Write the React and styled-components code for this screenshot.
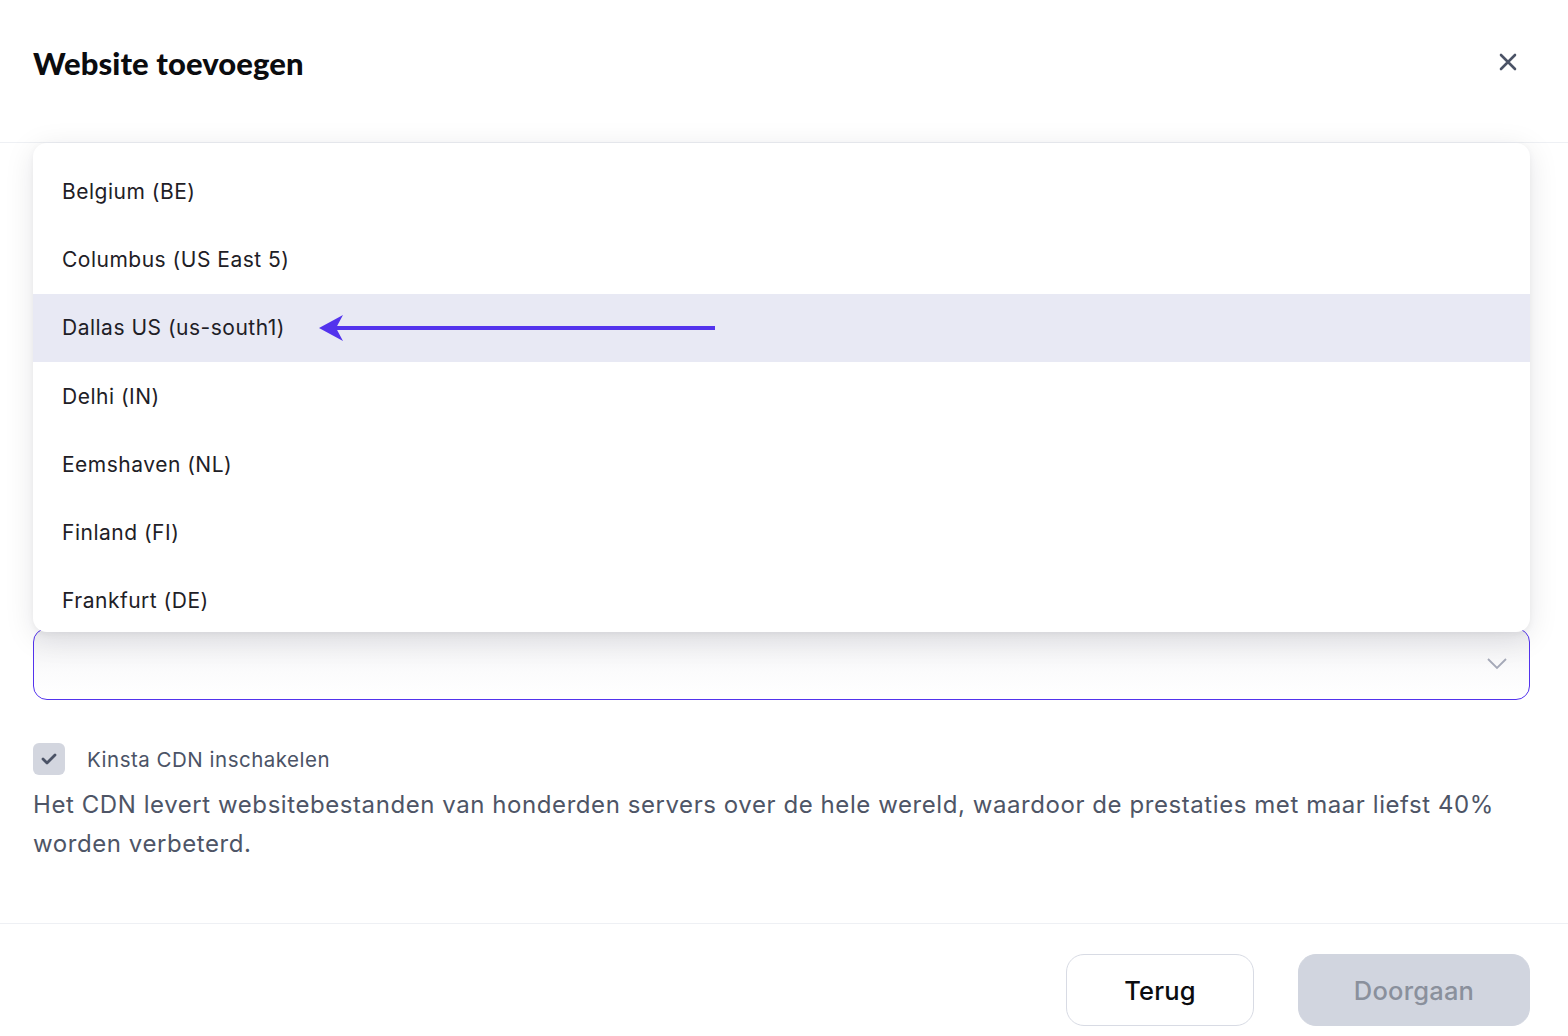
import React from 'react';
import styled, { createGlobalStyle } from 'styled-components';

const GlobalStyle = createGlobalStyle`
  *, *::before, *::after {
    box-sizing: border-box;
  }
  html, body {
    margin: 0;
    padding: 0;
    background: #fff;
  }
  body {
    font-family: Inter, "Noto Sans", sans-serif;
    -webkit-font-smoothing: antialiased;
  }
`;

const Modal = styled.div`
  width: 1568px;
  height: 1036px;
  display: flex;
  flex-direction: column;
  background: #fff;
  overflow: hidden;
`;

const Header = styled.header`
  height: 143px;
  flex-shrink: 0;
  display: flex;
  align-items: center;
  justify-content: space-between;
  padding: 0 42px 0 33px;
  border-bottom: 1px solid #eef0f4;
`;

const Title = styled.h1`
  margin: 0;
  margin-top: -16px;
  font-family: Lato, "Noto Sans", sans-serif;
  font-weight: 900;
  font-size: 31px;
  letter-spacing: 0.1px;
  color: #0b0c0f;
`;

const CloseButton = styled.button`
  border: none;
  background: none;
  padding: 0;
  margin-top: -18px;
  width: 36px;
  height: 36px;
  display: flex;
  align-items: center;
  justify-content: center;
  cursor: pointer;
`;

const Body = styled.div`
  flex: 1;
  padding: 485px 38px 0 33px;
  display: flex;
  flex-direction: column;
`;

const Field = styled.div`
  position: relative;
`;

const SelectBox = styled.div`
  height: 72px;
  border: 1px solid #5333ed;
  border-radius: 14px;
  background: linear-gradient(#efeff1, #fbfbfc 60%, #fff);
  display: flex;
  align-items: center;
  justify-content: flex-end;
  padding-right: 22px;
`;

const Menu = styled.ul`
  position: absolute;
  left: 0;
  right: 0;
  bottom: 68px;
  height: 489px;
  overflow: hidden;
  margin: 0;
  padding: 14px 0 0;
  list-style: none;
  background: #fff;
  border-radius: 14px;
  box-shadow: 0 6px 30px rgba(20, 24, 40, 0.1), 0 2px 6px rgba(20, 24, 40, 0.05);
  z-index: 2;
`;

const Item = styled.li`
  height: 68.3px;
  display: flex;
  align-items: center;
  gap: 32px;
  padding-left: 29px;
  font-size: 21px;
  letter-spacing: 0.5px;
  color: #1e2026;
  background: ${p => (p.active ? '#e8e9f4' : 'transparent')};
`;

const CheckRow = styled.label`
  display: flex;
  align-items: center;
  gap: 22px;
  margin-top: 43px;
  font-size: 20.5px;
  letter-spacing: 0.5px;
  color: #4b5366;
`;

const Checkbox = styled.span`
  width: 32px;
  height: 32px;
  border-radius: 6px;
  background: #d3d6df;
  display: flex;
  align-items: center;
  justify-content: center;
`;

const Description = styled.p`
  margin: 10px 0 0;
  font-size: 24px;
  line-height: 39px;
  letter-spacing: 0.57px;
  color: #4e5566;
`;

const Footer = styled.footer`
  height: 113px;
  flex-shrink: 0;
  border-top: 1px solid #eef0f4;
  display: flex;
  justify-content: flex-end;
  align-items: flex-start;
  gap: 44px;
  padding: 30px 38px 0 0;
`;

const Button = styled.button`
  height: 72px;
  width: ${p => p.w}px;
  border-radius: 18px;
  font-family: Inter, "Noto Sans", sans-serif;
  font-size: 25.5px;
  font-weight: 500;
  letter-spacing: 0.2px;
  border: 1px solid ${p => (p.disabled ? '#d1d5df' : '#d8dbe4')};
  background: ${p => (p.disabled ? '#d1d5df' : '#fff')};
  color: ${p => (p.disabled ? '#8a909c' : '#0b0c0f')};
`;

const regions = [
  'Belgium (BE)',
  'Columbus (US East 5)',
  'Dallas US (us-south1)',
  'Delhi (IN)',
  'Eemshaven (NL)',
  'Finland (FI)',
  'Frankfurt (DE)',
];

const Arrow = () => (
  <svg width="400" height="30" viewBox="0 0 400 30">
    <line x1="16" y1="15" x2="398" y2="15" stroke="#5333ed" strokeWidth="4" />
    <path d="M2 15 L26 2 L19 15 L26 28 Z" fill="#5333ed" />
  </svg>
);

export default function App() {
  return (
    <>
      <GlobalStyle />
      <Modal>
        <Header>
          <Title>Website toevoegen</Title>
          <CloseButton aria-label="Sluiten">
            <svg width="18" height="18" viewBox="0 0 18 18">
              <path d="M2 2 L16 16 M16 2 L2 16" stroke="#4b5366" strokeWidth="2.6" strokeLinecap="round" />
            </svg>
          </CloseButton>
        </Header>
        <Body>
          <Field>
            <Menu>
              {regions.map(r => (
                <Item key={r} active={r.startsWith('Dallas')}>
                  {r}
                  {r.startsWith('Dallas') && <Arrow />}
                </Item>
              ))}
            </Menu>
            <SelectBox>
              <svg width="20" height="12" viewBox="0 0 20 12">
                <path d="M1 1 L10 10 L19 1" stroke="#a5a9b8" strokeWidth="1.8" fill="none" />
              </svg>
            </SelectBox>
          </Field>
          <CheckRow>
            <Checkbox>
              <svg width="16" height="12" viewBox="0 0 16 12">
                <path d="M2 6 L6 10 L14 2" stroke="#4b5366" strokeWidth="2.8" fill="none" strokeLinecap="round" strokeLinejoin="round" />
              </svg>
            </Checkbox>
            Kinsta CDN inschakelen
          </CheckRow>
          <Description>
            Het CDN levert websitebestanden van honderden servers over de hele wereld, waardoor de prestaties met maar liefst 40% worden verbeterd.
          </Description>
        </Body>
        <Footer>
          <Button w={188}>Terug</Button>
          <Button w={232} disabled>Doorgaan</Button>
        </Footer>
      </Modal>
    </>
  );
}
